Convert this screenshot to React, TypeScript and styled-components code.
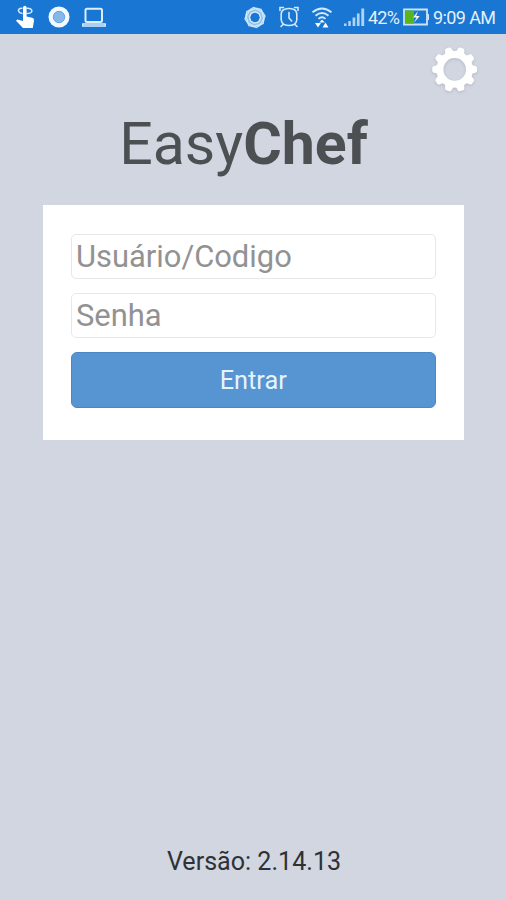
import React from "react";
import styled, { createGlobalStyle } from "styled-components";

const GlobalStyle = createGlobalStyle`
  * { box-sizing: border-box; }
  body { margin: 0; background: #d2d6e1; font-family: Roboto, "Liberation Sans", sans-serif; }
`;

const Screen = styled.div`
  width: 506px;
  height: 900px;
  display: flex;
  flex-direction: column;
  background: #d2d6e1;
  overflow: hidden;
`;

const StatusBar = styled.header`
  height: 34px;
  flex: none;
  display: flex;
  align-items: center;
  justify-content: space-between;
  padding: 0 11px 0 14px;
  background: #1976d2;
  color: #e4f1fc;
`;

const StatusGroup = styled.div<{ $gap: number }>`
  display: flex;
  align-items: center;
  gap: ${(p) => p.$gap}px;
  svg { display: block; flex: none; }
`;

const StatusText = styled.span<{ $width: number; $spacing: number }>`
  width: ${(p) => p.$width}px;
  font-size: 18px;
  line-height: 34px;
  letter-spacing: ${(p) => p.$spacing}px;
  white-space: nowrap;
  padding-top: 2px;
`;

const Toolbar = styled.div`
  height: 73px;
  flex: none;
  display: flex;
  justify-content: flex-end;
  padding: 10px 26px 0 0;
`;

const SettingsButton = styled.button`
  width: 50px;
  height: 50px;
  padding: 0;
  border: 0;
  background: none;
  svg { display: block; filter: drop-shadow(0 1px 1.5px rgba(110, 116, 130, 0.3)); }
`;

const Title = styled.h1`
  height: 97.5px;
  flex: none;
  margin: 0;
  padding-right: 19px;
  text-align: center;
  font-size: 59px;
  line-height: 73px;
  font-weight: 400;
  color: #4c5053;
  strong { font-weight: 700; }
`;

const Card = styled.form`
  width: 421.5px;
  height: 235.5px;
  flex: none;
  margin-left: 42.5px;
  padding: 29.5px 28px 0;
  background: #fff;
  display: flex;
  flex-direction: column;
  gap: 14px;
`;

const Field = styled.input`
  width: 100%;
  height: 45px;
  padding: 0 4.5px;
  border: 1.5px solid #e8e8e9;
  border-radius: 5px;
  background: #fff;
  font: 400 30.9px Roboto, "Liberation Sans", sans-serif;
  outline: none;
  &::placeholder { color: #929292; opacity: 1; }
`;

const SubmitButton = styled.button`
  width: 100%;
  height: 56px;
  padding: 0;
  border: 1px solid #4a86c8;
  border-radius: 6px;
  background: #5694d2;
  color: #e6f3fd;
  font: 400 25.3px Roboto, "Liberation Sans", sans-serif;
`;

const Version = styled.footer`
  margin-top: auto;
  padding: 0 0 20px 2px;
  text-align: center;
  font-size: 25.1px;
  line-height: 36px;
  color: #2e3136;
`;

const TouchIcon = () => (
  <svg width="22" height="26" viewBox="0 0 22 26">
    <path d="M8.5 4.2C4.8 4 3.800 6 4.800 7.700c.7 1.200 2.300 1.700 3.700 1.800M12.500 4.200c3.800-.2 6 1.300 5.300 3.200-.5 1.400-2.500 2-5.300 2.100" fill="none" stroke="#d8ecfd" strokeWidth="1.5" />
    <path d="M9 3.600a1.800 1.800 0 0 1 3.600 0v9l5.600 1.200c1.400.4 2 1.300 1.800 2.700L18.800 24H9L2 16.700l1.300-1.300L9 17z" fill="#fff" />
  </svg>
);

const RecordIcon = () => (
  <svg width="22" height="22" viewBox="0 0 22 22">
    <circle cx="11" cy="11" r="10.5" fill="#f3faff" />
    <circle cx="11" cy="11" r="5.7" fill="#85b8e9" stroke="#63a3e0" />
  </svg>
);

const LaptopIcon = () => (
  <svg width="26" height="22" viewBox="0 0 26 22" fill="none" stroke="#dceefd">
    <rect x="3.5" y="2.7" width="16.5" height="13.3" rx="1.5" strokeWidth="2" />
    <path d="M.7 18h22.600v2H.7z" strokeWidth="1.3" />
  </svg>
);

const ShutterIcon = () => (
  <svg width="24" height="24" viewBox="0 0 24 24" fill="none" stroke="#d3e9fb">
    <circle cx="11" cy="12.5" r="7.9" stroke="#8fc2ee" strokeWidth="4.5" />
    {[0, 45, 90, 135, 180, 225, 270, 315].map((angle) => (
      <path key={angle} d="M4.5 6.5 9.5 2.300l7.500 4.200M7 8l4-1 4 1.500" strokeWidth="1.1" transform={`rotate(${angle} 11 12.5)`} />
    ))}
  </svg>
);

const AlarmIcon = () => (
  <svg width="20" height="22" viewBox="0 0 20 22" fill="none" stroke="#d3e9fb" strokeWidth="1.6" strokeLinecap="round">
    <path d="M5 3.500Q10 1.500 15 3.500Q17.500 4.500 17.800 8V14Q17.500 17 15 18.500Q10 20.500 5 18.500Q2.500 17 2.200 14V8Q2.500 4.500 5 3.500z" />
    <path d="M1 4.500V1.500h3.500M15.500 1.500H19v3M4 18.500l-2 2M16 18.500l2 2M10 6.500V12l2.700 3" />
  </svg>
);

const WifiIcon = () => (
  <svg width="22" height="24" viewBox="0 0 22 24" fill="none" stroke="#d3e9fb">
    <path d="M2.500 7.300Q12-.5 21.500 7.300M5.500 10.700Q12 5.300 18.500 10.700M8.500 13.900Q12 10.800 15.500 13.900" strokeWidth="1.9" />
    <path d="m12 14.500-2.800 3h5.600zM5 18h6l-3 4.500zM15.500 17.500l3 5h-6z" fill="#f5fbff" stroke="none" />
  </svg>
);

const SignalIcon = () => (
  <svg width="22" height="20" viewBox="0 0 22 20" fill="#afd3f4">
    <path d="M1 16.500h2.500V19H1zM5.300 14h2.500v5H5.300zM9.600 10.500h2.700V19H9.600zM13.900 6.500h2.700V19h-2.700zM18.300 1.500h2.900V19h-2.900z" />
  </svg>
);

const BatteryIcon = () => (
  <svg width="27" height="18" viewBox="0 0 27 18">
    <path d="M1 1.500h23v15H1z" fill="none" stroke="#cde4f6" strokeWidth="1.8" />
    <path d="M2 2.500h9v13H2z" fill="#58b51b" />
    <path d="M24.500 6H26v6h-1.500z" fill="#cde4f6" />
    <path d="m15 3-5 6.500h3.500L10.800 15l6-7h-3.600z" fill="#edf8e7" />
  </svg>
);

const GearIcon = () => (
  <svg width="50" height="50" viewBox="0 0 50 50">
    <circle cx="24.7" cy="25.4" r="14.8" fill="none" stroke="#fff" strokeWidth="7" />
    {Array.from({ length: 10 }, (_, i) => (
      <path
        key={i}
        d="m20 9.700 1.300-5q.4-1.700 1.700-1.700h3.400q1.300 0 1.700 1.700l1.300 5z"
        fill="#fff"
        transform={`rotate(${18 + i * 36} 24.7 25.4)`}
      />
    ))}
  </svg>
);

export default function App() {
  return (
    <>
      <GlobalStyle />
      <Screen>
        <StatusBar>
          <StatusGroup $gap={12}>
            <TouchIcon />
            <RecordIcon />
            <LaptopIcon />
          </StatusGroup>
          <StatusGroup $gap={3}>
            <StatusGroup $gap={11}>
              <ShutterIcon />
              <AlarmIcon />
              <WifiIcon />
              <SignalIcon />
            </StatusGroup>
            <StatusGroup $gap={3}>
              <StatusText $width={32} $spacing={-0.8}>42%</StatusText>
              <BatteryIcon />
              <StatusText $width={62} $spacing={-0.6}>9:09 AM</StatusText>
            </StatusGroup>
          </StatusGroup>
        </StatusBar>
        <Toolbar>
          <SettingsButton type="button">
            <GearIcon />
          </SettingsButton>
        </Toolbar>
        <Title>
          Easy<strong>Chef</strong>
        </Title>
        <Card>
          <Field type="text" placeholder="Usuário/Codigo" />
          <Field type="password" placeholder="Senha" />
          <SubmitButton type="button">Entrar</SubmitButton>
        </Card>
        <Version>Versão: 2.14.13</Version>
      </Screen>
    </>
  );
}
